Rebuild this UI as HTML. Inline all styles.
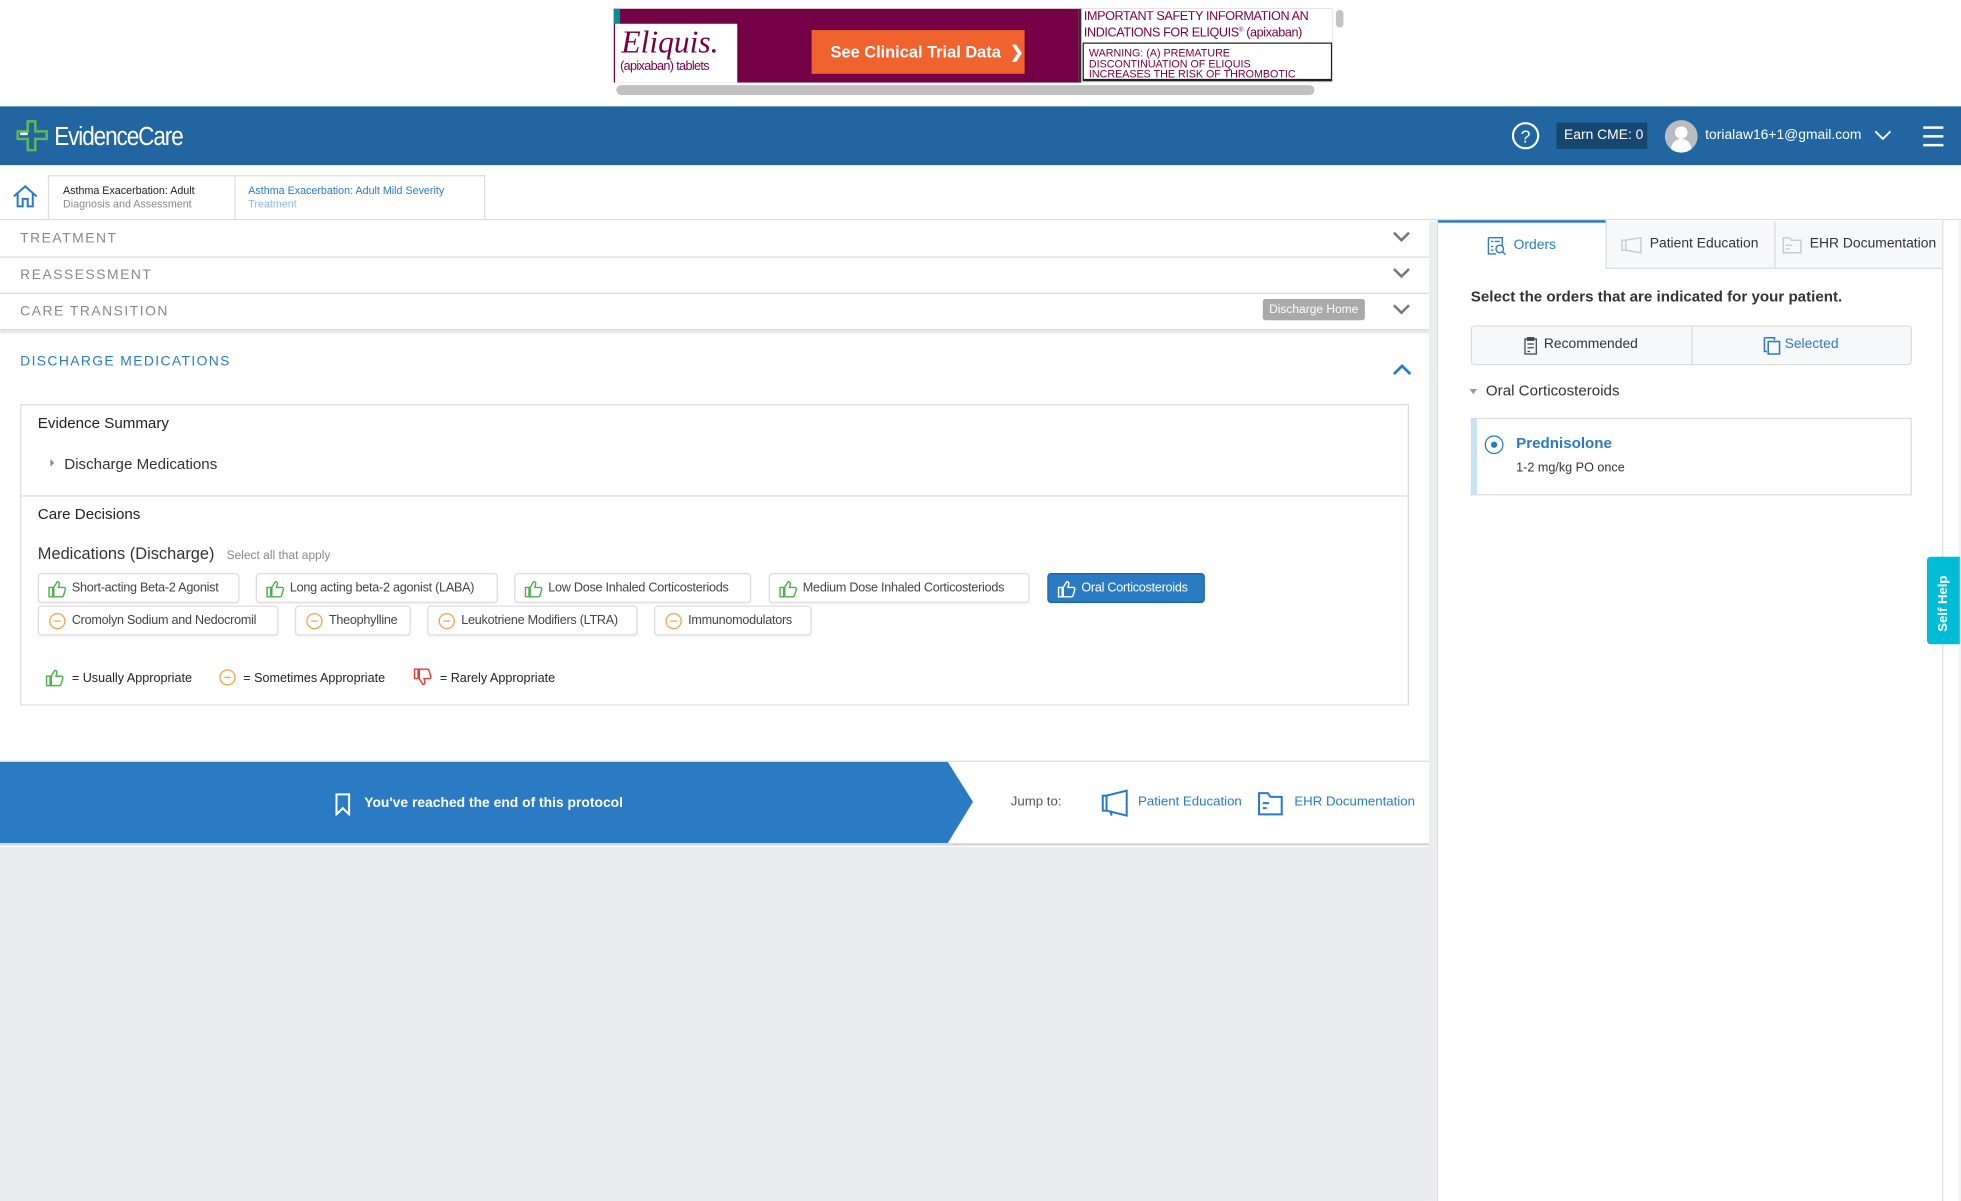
<!DOCTYPE html>
<html><head><meta charset="utf-8"><style>
*{box-sizing:border-box;margin:0;padding:0}
html,body{width:1961px;height:1201px;overflow:hidden;background:#fff;font-family:"Liberation Sans",Arial,sans-serif}
#w{position:absolute;left:0;top:0;width:1556px;height:960px;transform:scale(1.2603,1.251);transform-origin:0 0;background:#fff}
.a{position:absolute}
.row{position:absolute;left:0;width:1134px;height:29px;border-bottom:1px solid #ddd;font-size:11px;letter-spacing:1.2px;color:#888;padding:8px 16px}
.chev{position:absolute;right:14px;top:6px}
.chip{position:absolute;height:24px;border:1px solid #ddd;border-radius:3px;font-size:10px;letter-spacing:-.2px;white-space:nowrap;overflow:hidden;color:#444;padding:6px 4px 0 26px;background:#fff;box-shadow:0 1px 1px rgba(0,0,0,.05)}
.chip svg{position:absolute;left:7px;top:4px}
.min{position:absolute;left:8px;top:5px;width:13px;height:13px;border:1.3px solid #f0a050;border-radius:50%}
.min:after{content:"";position:absolute;left:3px;top:5px;width:5px;height:1.3px;background:#f0a050}
</style></head><body><div id="w">
<!-- ad -->
<div class="a" style="left:487px;top:7px;width:570px;height:59px;background:#740046"></div>
<div class="a" style="left:487px;top:7px;width:5px;height:12px;background:#0a8f8f"></div>
<div class="a" style="left:488px;top:19px;width:97px;height:47px;background:#fff"></div>
<div class="a" style="left:493px;top:21px;font:italic 25px 'Liberation Serif',serif;color:#740046">Eliquis.</div>
<div class="a" style="left:492px;top:48px;font-size:10px;color:#740046;letter-spacing:-.5px">(apixaban) tablets</div>
<div class="a" style="left:644px;top:24px;width:169px;height:35px;background:#f0632f;color:#fff;font:bold 13px 'Liberation Sans',sans-serif;padding:10px 0 0 15px">See Clinical Trial Data &nbsp;❯</div>
<div class="a" style="left:856px;top:7px;width:201px;height:59px;background:#fff;border-left:2px solid #333"></div>
<div class="a" style="left:860px;top:9px;font-size:10px;line-height:10px;color:#740046;width:196px;white-space:nowrap;overflow:hidden;letter-spacing:-.3px">IMPORTANT SAFETY INFORMATION AN<br>INDICATIONS FOR ELIQUIS<sup style="font-size:5px">®</sup> (apixaban)</div>
<div class="a" style="left:859px;top:34px;width:198px;height:31px;border:1.5px solid #222;border-bottom-width:2px;font-size:8.5px;line-height:8.5px;color:#740046;padding:3px 4px">WARNING: (A) PREMATURE<br>DISCONTINUATION OF ELIQUIS<br>INCREASES THE RISK OF THROMBOTIC</div>
<div class="a" style="left:1060px;top:8px;width:6px;height:14px;background:#c3c3c3;border-radius:3px"></div>
<div class="a" style="left:489px;top:68px;width:554px;height:8px;background:#c1c1c1;border-radius:4px"></div>
<!-- header -->
<div class="a" style="left:0;top:85px;width:1556px;height:47px;background:#2166a1"></div>
<svg class="a" style="left:12px;top:95px" width="28" height="28"><path d="M10 2h6v8h9v6h-9v9h-6v-9H2v-6h8z" fill="none" stroke="#5cb85c" stroke-width="2"/><path d="M4 12h6" stroke="#fff" stroke-width="2"/></svg>
<div class="a" style="left:43px;top:98px;color:#fff;font-size:21px;letter-spacing:-1px;transform:scaleX(.85);transform-origin:0 0">EvidenceCare</div>
<svg class="a" style="left:1199px;top:97px" width="23" height="23"><circle cx="11.5" cy="11.5" r="10" fill="none" stroke="#fff" stroke-width="1.7"/><text x="11.5" y="17" text-anchor="middle" fill="#fff" font-size="14" font-family="Liberation Sans">?</text></svg>
<div class="a" style="left:1235px;top:98px;width:72px;height:21px;background:#17476f;color:#fff;font-size:11px;padding:4px 0 0 6px">Earn CME: 0</div>
<div class="a" style="left:1321px;top:96px;width:26px;height:26px;border-radius:50%;background:#b9bcc0;overflow:hidden"><div class="a" style="left:8px;top:5px;width:10px;height:10px;border-radius:50%;background:#fff"></div><div class="a" style="left:5px;top:15px;width:16px;height:14px;border-radius:8px 8px 0 0;background:#fff"></div></div>
<div class="a" style="left:1353px;top:102px;color:#fff;font-size:11px">torialaw16+1@gmail.com</div>
<svg class="a" style="left:1487px;top:103px" width="14" height="10"><path d="M1 2l6 6 6-6" fill="none" stroke="#fff" stroke-width="1.5"/></svg>
<div class="a" style="left:1526px;top:101px;width:16px;height:2px;background:#fff;box-shadow:0 7px 0 #fff,0 14px 0 #fff"></div>
<!-- breadcrumb -->
<div class="a" style="left:0;top:132px;width:1556px;height:44px;border-bottom:1px solid #ddd"></div>
<svg class="a" style="left:9px;top:147px" width="22" height="20"><path d="M2 10L11 2l9 8M5 8v10h4v-6h4v6h4V8" fill="none" stroke="#2a7bc4" stroke-width="1.6"/></svg>
<div class="a" style="left:38px;top:140px;width:148px;height:36px;border-left:1px solid #ddd;border-top:1px solid #ddd;font-size:8.5px;padding:6px 0 0 11px;color:#222;line-height:11px">Asthma Exacerbation: Adult<br><span style="color:#888">Diagnosis and Assessment</span></div>
<div class="a" style="left:186px;top:140px;width:199px;height:36px;border:1px solid #ddd;border-bottom:none;font-size:8.5px;padding:6px 0 0 10px;color:#2a7bc4;line-height:11px">Asthma Exacerbation: Adult Mild Severity<br><span style="color:#8fb8e0">Treatment</span></div>
<!-- left panel -->
<div class="row" style="top:177px">TREATMENT<svg class="chev" width="16" height="12"><path d="M2 3l6 6 6-6" fill="none" stroke="#777" stroke-width="2"/></svg></div>
<div class="row" style="top:206px">REASSESSMENT<svg class="chev" width="16" height="12"><path d="M2 3l6 6 6-6" fill="none" stroke="#777" stroke-width="2"/></svg></div>
<div class="row" style="top:235px;box-shadow:0 2px 2px rgba(0,0,0,.12)">CARE TRANSITION<div class="a" style="left:1002px;top:4px;height:17px;width:81px;background:#aaa;color:#fff;font-size:9.5px;letter-spacing:0;border-radius:2px;padding:3px 0 0 5px">Discharge Home</div><svg class="chev" width="16" height="12"><path d="M2 3l6 6 6-6" fill="none" stroke="#777" stroke-width="2"/></svg></div>
<div class="a" style="left:16px;top:283px;font-size:11px;letter-spacing:1.1px;color:#2a7bc4">DISCHARGE MEDICATIONS</div>
<svg class="a" style="left:1104px;top:289px" width="17" height="12"><path d="M2 10l6.5-6.5L15 10" fill="none" stroke="#2a7bc4" stroke-width="2.2"/></svg>
<div class="a" style="left:16px;top:323px;width:1102px;height:241px;border:1px solid #ddd"></div>
<div class="a" style="left:16px;top:396px;width:1102px;height:1px;background:#ddd"></div>
<div class="a" style="left:30px;top:331px;font-size:12px;color:#222">Evidence Summary</div>
<div class="a" style="left:40px;top:367px;width:0;height:0;border-left:3px solid #888;border-top:3px solid transparent;border-bottom:3px solid transparent"></div>
<div class="a" style="left:51px;top:364px;font-size:12px;color:#333">Discharge Medications</div>
<div class="a" style="left:30px;top:404px;font-size:12px;color:#222">Care Decisions</div>
<div class="a" style="left:30px;top:435px;font-size:13px;color:#333">Medications (Discharge) <span style="font-size:9.5px;color:#888;margin-left:6px">Select all that apply</span></div>
<svg width="0" height="0" style="position:absolute"><defs><symbol id="tu" viewBox="0 0 16 16"><path d="M1 7h3v8H1zM5 7l3-5c1.5 0 2 1 1.5 3L9 7h4.5c1 0 1.5 1 1.2 2l-1.5 5c-.3.8-1 1-1.5 1H5z" fill="none" stroke="currentColor" stroke-width="1.2"/></symbol></defs></svg>
<div class="chip" style="left:30px;top:458px;width:160px"><svg width="15" height="15" style="color:#4caf50"><use href="#tu"/></svg>Short-acting Beta-2 Agonist</div>
<div class="chip" style="left:203px;top:458px;width:192px"><svg width="15" height="15" style="color:#4caf50"><use href="#tu"/></svg>Long acting beta-2 agonist (LABA)</div>
<div class="chip" style="left:408px;top:458px;width:188px"><svg width="15" height="15" style="color:#4caf50"><use href="#tu"/></svg>Low Dose Inhaled Corticosteriods</div>
<div class="chip" style="left:610px;top:458px;width:207px"><svg width="15" height="15" style="color:#4caf50"><use href="#tu"/></svg>Medium Dose Inhaled Corticosteriods</div>
<div class="chip" style="left:831px;top:458px;width:125px;background:#2a7bc4;border-color:#1f63a3;color:#fff"><svg width="15" height="15" style="color:#fff"><use href="#tu"/></svg>Oral Corticosteroids</div>
<div class="chip" style="left:30px;top:484px;width:191px"><span class="min"></span>Cromolyn Sodium and Nedocromil</div>
<div class="chip" style="left:234px;top:484px;width:92px"><span class="min"></span>Theophylline</div>
<div class="chip" style="left:339px;top:484px;width:167px"><span class="min"></span>Leukotriene Modifiers (LTRA)</div>
<div class="chip" style="left:519px;top:484px;width:125px"><span class="min"></span>Immunomodulators</div>
<svg class="a" style="left:36px;top:534px;color:#4caf50" width="15" height="15"><use href="#tu"/></svg>
<div class="a" style="left:57px;top:537px;font-size:10px;color:#222">= Usually Appropriate</div>
<div class="min" style="left:174px;top:535px"></div>
<div class="a" style="left:193px;top:537px;font-size:10px;color:#222">= Sometimes Appropriate</div>
<svg class="a" style="left:328px;top:534px;color:#e53935;transform:scaleY(-1)" width="15" height="15"><use href="#tu"/></svg>
<div class="a" style="left:349px;top:537px;font-size:10px;color:#222">= Rarely Appropriate</div>
<!-- end bar -->
<div class="a" style="left:0;top:608px;width:1134px;height:68px;border-top:1px solid #ddd;border-bottom:2px solid #d6d6d6"></div>
<svg class="a" style="left:0;top:609px" width="775" height="65"><path d="M0 0H752L772 32 752 65H0z" fill="#2a7bc4"/></svg>
<svg class="a" style="left:265px;top:634px" width="14" height="18"><path d="M2 1h10v16l-5-5-5 5z" fill="none" stroke="#fff" stroke-width="1.6"/></svg>
<div class="a" style="left:289px;top:636px;font-size:11px;color:#fff;font-weight:bold">You've reached the end of this protocol</div>
<div class="a" style="left:802px;top:635px;font-size:10.5px;color:#555">Jump to:</div>
<svg class="a" style="left:873px;top:631px" width="24" height="22"><path d="M2 5h3v12H2zM5 5l16-4v20L5 17M8 17l1 4" fill="none" stroke="#2a7bc4" stroke-width="1.6"/></svg>
<div class="a" style="left:903px;top:635px;font-size:10.5px;color:#2a7bc4">Patient Education</div>
<svg class="a" style="left:997px;top:630px" width="22" height="22"><path d="M2 4h7l2 3h9v14H2zM5 12h5M5 16h3" fill="none" stroke="#2a7bc4" stroke-width="1.6"/></svg>
<div class="a" style="left:1027px;top:635px;font-size:10.5px;color:#2a7bc4">EHR Documentation</div>
<div class="a" style="left:0;top:677px;width:1134px;height:283px;background:#eaecef"></div>
<div class="a" style="left:1134px;top:177px;width:6px;height:783px;background:#eaecef"></div>
<!-- right panel -->
<div class="a" style="left:1140px;top:176px;width:402px;height:784px;border-left:1px solid #ddd;border-right:1px solid #ddd;background:#fff"></div>
<div class="a" style="left:1554px;top:176px;width:2px;height:784px;background:#f2f2f2"></div>
<div class="a" style="left:1141px;top:176px;width:133px;height:39px;border-top:2px solid #2a7bc4;font-size:11px;color:#2a7bc4;padding:12px 0 0 60px">Orders</div>
<svg class="a" style="left:1180px;top:189px" width="15" height="15"><path d="M1 1h11v6M1 1v13h6M3 4h2M3 8h2M3 11h2M6 4h4" fill="none" stroke="#2a7bc4" stroke-width="1.1"/><circle cx="10" cy="10" r="3" fill="none" stroke="#2a7bc4" stroke-width="1.1"/><path d="M12 12l2.5 2.5" stroke="#2a7bc4" stroke-width="1.1"/></svg>
<div class="a" style="left:1274px;top:177px;width:134px;height:38px;background:#f7f8fa;border-left:1px solid #ddd;border-bottom:1px solid #ddd;font-size:11px;color:#333;padding:12px 0 0 34px">Patient Education</div>
<svg class="a" style="left:1286px;top:189px" width="17" height="14"><path d="M1 3h3v8H1zM4 3l12-2v12L4 11" fill="none" stroke="#ccc" stroke-width="1.2"/></svg>
<div class="a" style="left:1408px;top:177px;width:133px;height:38px;background:#f7f8fa;border-left:1px solid #ddd;border-bottom:1px solid #ddd;font-size:11px;color:#333;padding:12px 0 0 27px;white-space:nowrap">EHR Documentation</div>
<svg class="a" style="left:1414px;top:189px" width="16" height="14"><path d="M1 1h5l1.5 2H15v10H1zM3 7h5M3 10h3" fill="none" stroke="#ccc" stroke-width="1.2"/></svg>
<div class="a" style="left:1167px;top:230px;font-size:12px;font-weight:bold;color:#333">Select the orders that are indicated for your patient.</div>
<div class="a" style="left:1167px;top:260px;width:350px;height:32px;border:1px solid #ddd;border-radius:3px;background:#f7f8fa"></div>
<div class="a" style="left:1342px;top:261px;width:1px;height:30px;background:#ddd"></div>
<svg class="a" style="left:1208px;top:269px" width="13" height="15"><path d="M2 2h9v12H2zM4 1h5v2H4zM4 6h5M4 9h5M4 12h2" fill="none" stroke="#444" stroke-width="1"/></svg>
<div class="a" style="left:1225px;top:269px;font-size:11px;color:#333">Recommended</div>
<svg class="a" style="left:1399px;top:269px" width="14" height="15"><path d="M1 1h8v2M1 1v11h2M4 4h9v10H4z" fill="none" stroke="#2a7bc4" stroke-width="1.2"/></svg>
<div class="a" style="left:1416px;top:269px;font-size:11px;color:#2a7bc4">Selected</div>
<div class="a" style="left:1166px;top:311px;width:0;height:0;border-top:4px solid #999;border-left:3.5px solid transparent;border-right:3.5px solid transparent"></div>
<div class="a" style="left:1179px;top:305px;font-size:12px;color:#333">Oral Corticosteroids</div>
<div class="a" style="left:1167px;top:334px;width:350px;height:62px;border:1px solid #ddd;border-left:5px solid #c7e4f0"></div>
<div class="a" style="left:1178px;top:348px;width:15px;height:15px;border:1.3px solid #2a7bc4;border-radius:50%"><div class="a" style="left:4px;top:4px;width:5px;height:5px;border-radius:50%;background:#2a7bc4"></div></div>
<div class="a" style="left:1203px;top:347px;font-size:12px;font-weight:bold;color:#2a7bc4">Prednisolone</div>
<div class="a" style="left:1203px;top:369px;font-size:10px;color:#333">1-2 mg/kg PO once</div>
<div class="a" style="left:1529px;top:445px;width:26px;height:70px;background:#00bcd4;border-radius:3px 0 0 3px"></div>
<div class="a" style="width:70px;transform:rotate(-90deg);transform-origin:0 0;font-size:10.5px;font-weight:bold;color:#fff;white-space:nowrap;top:505px;left:1536px">Self Help</div>
</div></body></html>
